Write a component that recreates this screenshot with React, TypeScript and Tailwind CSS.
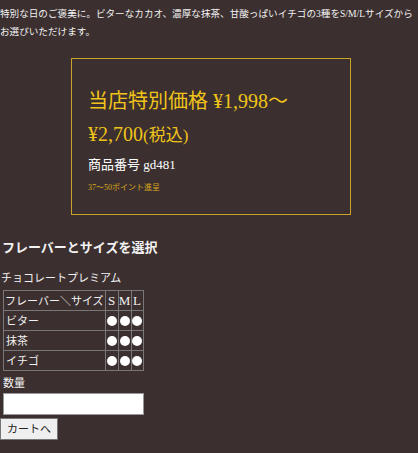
import React from "react";

const FLAVORS = ["ビター", "抹茶", "イチゴ"];

function Dot() {
  return <span className="mx-auto block h-[10px] w-[10px] rounded-full bg-white" />;
}

export default function App() {
  return (
    <div
      className="min-h-[453px] w-full bg-[#3b2f2f] text-[#f2f2f2]"
      style={{ fontFamily: '"Liberation Serif", "Noto Sans CJK JP", serif' }}
    >
      <p className="pt-[5px] text-[9.6px] leading-[18px]">
        特別な日のご褒美に。ビターなカカオ、濃厚な抹茶、甘酸っぱいイチゴの3種をS/M/Lサイズからお選びいただけます。
      </p>

      <div className="ml-[71px] mt-[17px] w-[280px] border border-[#c9a227] px-[16px] pt-[26px] pb-[20px]">
        <p className="text-[20px] leading-[33px] text-[#f0c419]">
          当店特別価格 ¥1,998～ ¥2,700<span className="text-[17px]">(税込)</span>
        </p>
        <p className="mt-[4px] text-[13px] leading-[18px] text-white">商品番号 gd481</p>
        <p className="mt-[8px] text-[8px] leading-[12px] text-[#d9a91c]">37～50ポイント進呈</p>
      </div>

      <h2 className="mt-[24px] pl-[2px] text-[13px] font-bold leading-[18px]">フレーバーとサイズを選択</h2>
      <p className="mt-[13px] pl-[1px] text-[11px] leading-[16px]">チョコレートプレミアム</p>

      <table className="mt-[4px] ml-[3px] border-collapse border border-[#777] text-[11px] leading-[16px]">
        <thead>
          <tr className="h-[20px]">
            <th className="border border-[#777] px-[1px] font-normal">フレーバー＼サイズ</th>
            <th className="w-[13px] border border-[#777] p-0 text-[13px] font-normal">S</th>
            <th className="w-[13px] border border-[#777] p-0 text-[13px] font-normal">M</th>
            <th className="w-[12px] border border-[#777] p-0 text-[13px] font-normal">L</th>
          </tr>
        </thead>
        <tbody>
          {FLAVORS.map((f) => (
            <tr key={f} className="h-[20px]">
              <td className="border border-[#777] px-[2px] text-left">{f}</td>
              <td className="border border-[#777] p-0"><Dot /></td>
              <td className="border border-[#777] p-0"><Dot /></td>
              <td className="border border-[#777] p-0"><Dot /></td>
            </tr>
          ))}
        </tbody>
      </table>

      <p className="mt-[4px] pl-[3px] text-[11px] leading-[16px]">数量</p>
      <input type="text" className="mt-[2px] ml-[3px] block h-[22px] w-[141px] border border-[#999] bg-white" />
      <button className="mt-[3px] block h-[22px] border border-[#767676] bg-[#efefef] px-[6px] text-[11px] text-[#222]">
        カートへ
      </button>
    </div>
  );
}
